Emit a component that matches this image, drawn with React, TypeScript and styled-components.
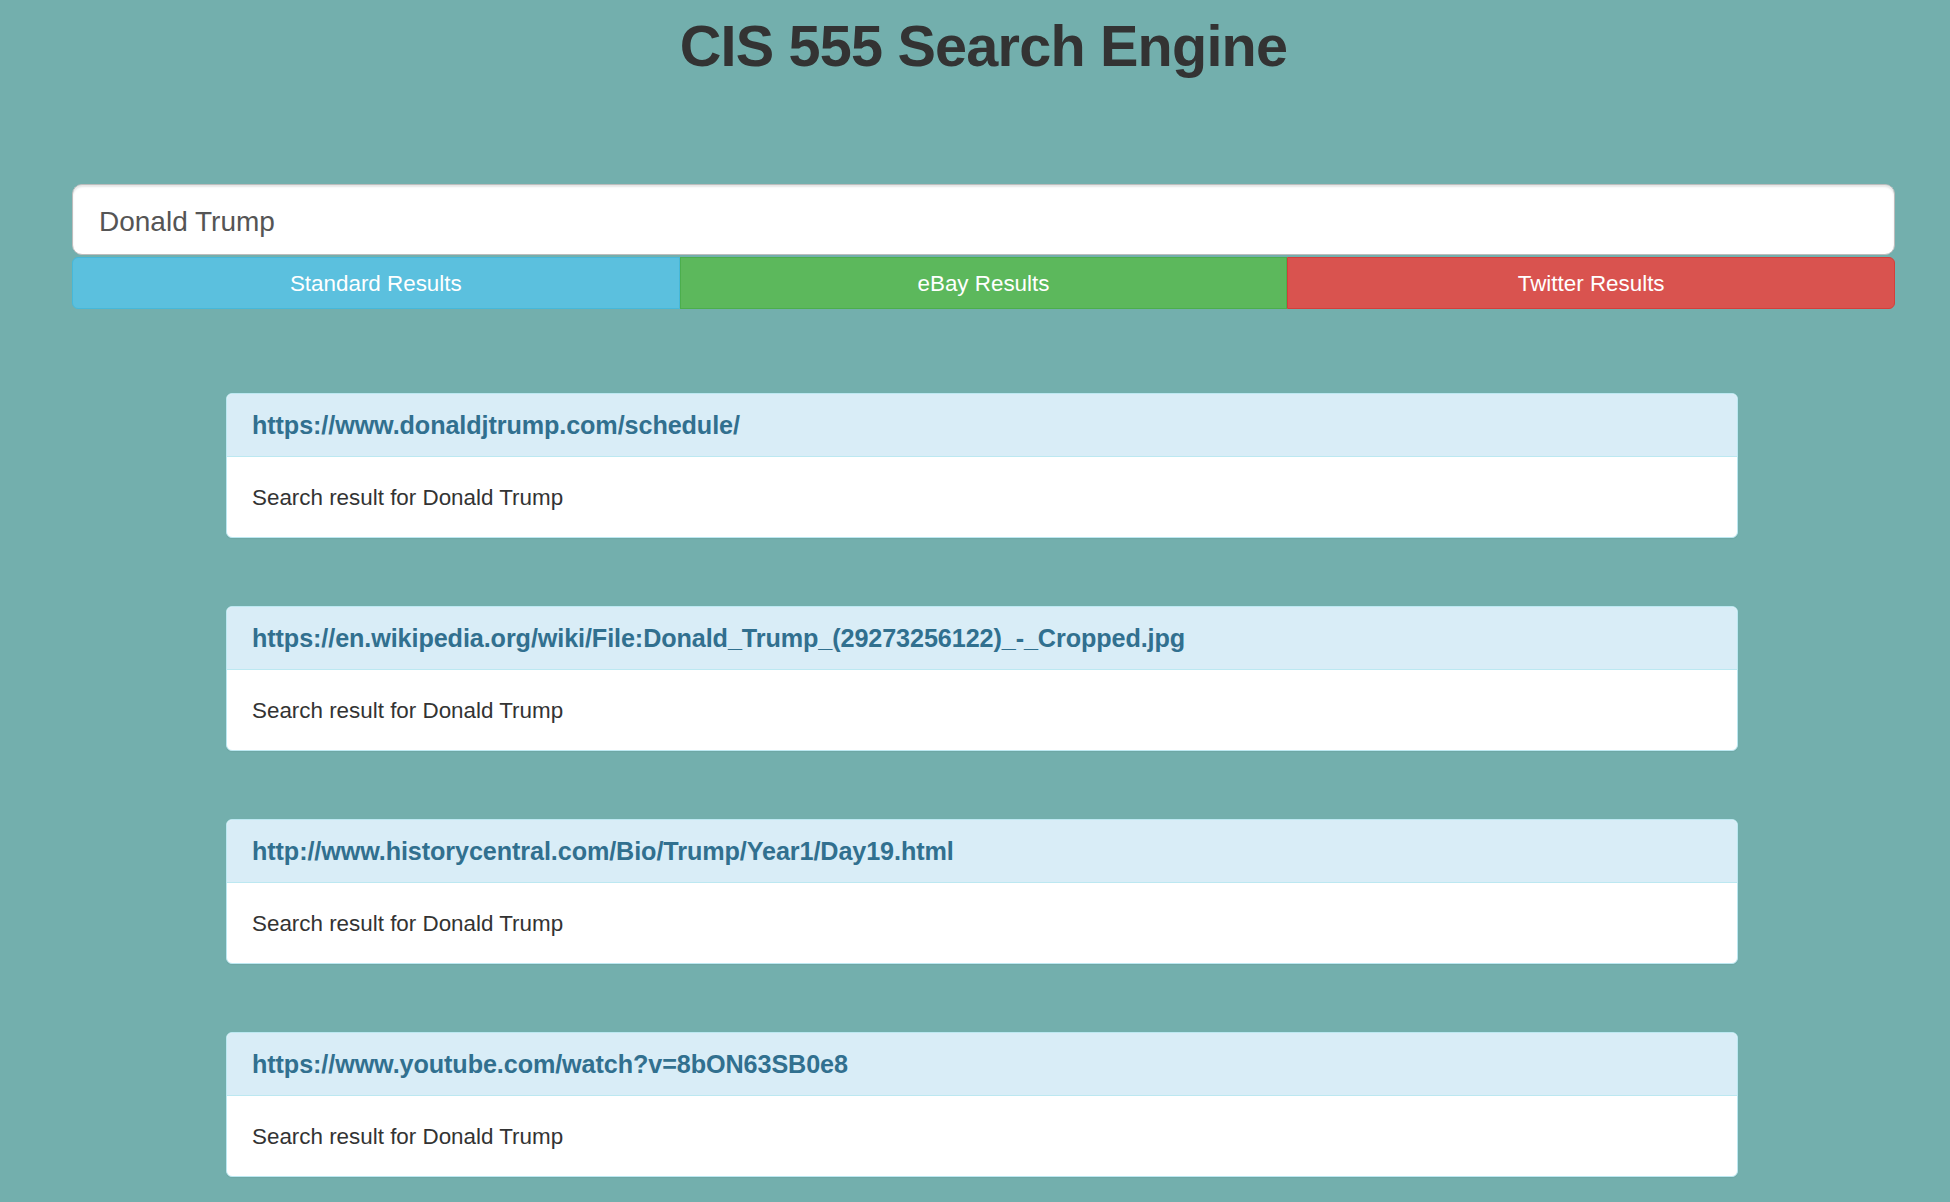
import React from "react";
import styled, { createGlobalStyle } from "styled-components";

const Global = createGlobalStyle`
  html, body { margin: 0; padding: 0; background: #73afad; }
  body { font-family: "Liberation Sans", Arial, Helvetica, sans-serif; color: #333; }
  * { box-sizing: border-box; }
`;

const Page = styled.div`
  min-height: 1202px;
  padding: 0 55px 40px 72px;
  display: flex;
  flex-direction: column;
`;

const Title = styled.h1`
  margin: 15px 0 0;
  font-size: 57.6px;
  line-height: 63px;
  font-weight: 700;
  letter-spacing: -0.8px;
  text-align: center;
  color: #333;
`;

const SearchArea = styled.div`
  margin-top: 106px;
  display: flex;
  flex-direction: column;
  gap: 2px;
`;

const SearchInput = styled.input`
  height: 71px;
  width: 100%;
  padding: 4px 26px 0;
  font-family: "Liberation Sans", Arial, sans-serif;
  font-size: 28px;
  color: #555;
  background: #fff;
  border: 1px solid #bdbdbd;
  border-radius: 10px;
  box-shadow: inset 0 2px 2px rgba(0, 0, 0, 0.1);
  outline: none;
`;

const ButtonRow = styled.div`
  display: grid;
  grid-template-columns: repeat(3, 1fr);
  height: 52px;
`;

const variants = {
  info: { bg: "#5bc0de", border: "#46b8da" },
  success: { bg: "#5cb85c", border: "#4cae4c" },
  danger: { bg: "#d9534f", border: "#d43f3a" },
} as const;

const TabButton = styled.button<{ $variant: keyof typeof variants; $pos: "first" | "mid" | "last" }>`
  background: ${(p) => variants[p.$variant].bg};
  border: 1.5px solid ${(p) => variants[p.$variant].border};
  color: #fff;
  font-family: "Liberation Sans", Arial, sans-serif;
  font-size: 22.4px;
  padding: 2px 0 0;
  border-radius: ${(p) =>
    p.$pos === "first" ? "6px 0 0 6px" : p.$pos === "last" ? "0 6px 6px 0" : "0"};
  cursor: pointer;
`;

const Results = styled.div`
  margin: 84px 157px 0 154px;
  display: flex;
  flex-direction: column;
  gap: 68px;
`;

const Panel = styled.div`
  background: #fff;
  border: 1px solid #bce8f1;
  border-radius: 6px;
  box-shadow: 0 1px 1px rgba(0, 0, 0, 0.05);
  overflow: hidden;
`;

const PanelHeading = styled.div`
  height: 63px;
  padding: 0 24px 0 25px;
  background: #d9edf7;
  border-bottom: 1.5px solid #bce8f1;
  display: flex;
  align-items: center;
`;

const PanelLink = styled.a`
  font-size: 25.2px;
  font-weight: 700;
  color: #31708f;
  text-decoration: none;
  letter-spacing: -0.1px;
`;

const PanelBody = styled.div`
  height: 80px;
  padding: 2px 24px 0 25px;
  display: flex;
  align-items: center;
  font-size: 22.4px;
  color: #333;
`;

const results = [
  "https://www.donaldjtrump.com/schedule/",
  "https://en.wikipedia.org/wiki/File:Donald_Trump_(29273256122)_-_Cropped.jpg",
  "http://www.historycentral.com/Bio/Trump/Year1/Day19.html",
  "https://www.youtube.com/watch?v=8bON63SB0e8",
];

export default function App() {
  return (
    <>
      <Global />
      <Page>
        <Title>CIS 555 Search Engine</Title>
        <SearchArea>
          <SearchInput defaultValue="Donald Trump" />
          <ButtonRow>
            <TabButton $variant="info" $pos="first">Standard Results</TabButton>
            <TabButton $variant="success" $pos="mid">eBay Results</TabButton>
            <TabButton $variant="danger" $pos="last">Twitter Results</TabButton>
          </ButtonRow>
        </SearchArea>
        <Results>
          {results.map((url) => (
            <Panel key={url}>
              <PanelHeading>
                <PanelLink href={url}>{url}</PanelLink>
              </PanelHeading>
              <PanelBody>Search result for Donald Trump</PanelBody>
            </Panel>
          ))}
        </Results>
      </Page>
    </>
  );
}
